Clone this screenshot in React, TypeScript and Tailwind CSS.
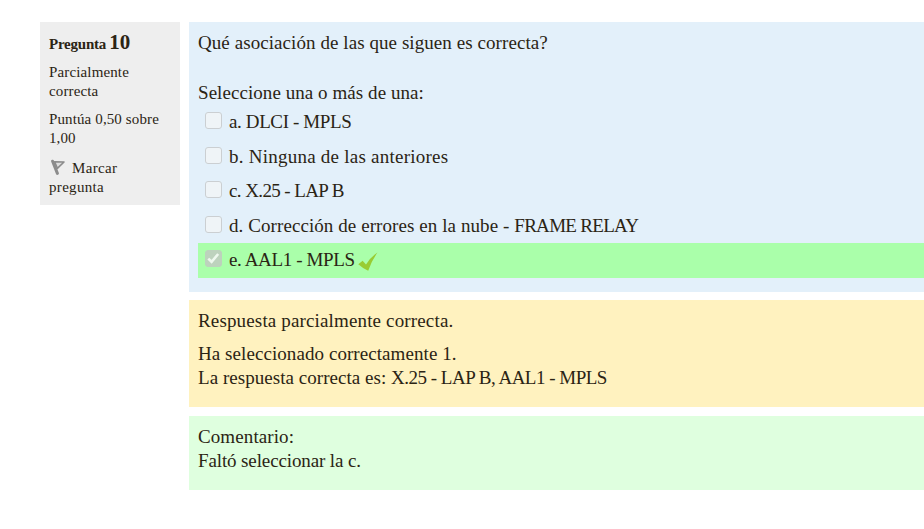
import React from "react";

type Option = { label: string; tracking: string; tail?: string; checked?: boolean };

const options: Option[] = [
  { label: "a. DLCI - MPLS", tracking: "tracking-[-0.38px]" },
  { label: "b. Ninguna de las anteriores", tracking: "tracking-[0.24px]" },
  { label: "c. X.25 - LAP B", tracking: "tracking-[-0.6px]" },
  { label: "d. Corrección de errores en la nube - ", tracking: "tracking-[0.08px]", tail: "FRAME RELAY" },
  { label: "e. AAL1 - MPLS", tracking: "tracking-[-0.38px]", checked: true },
];

function Checkbox({ checked }: { checked?: boolean }) {
  return (
    <svg className="mb-[3px] ml-[7px] mr-[7px] size-[17px] shrink-0" viewBox="0 0 17 17">
      <rect x="0.5" y="0.5" width="16" height="16" rx="2.5" fill={checked ? "#bdd2bd" : "#eff4f7"} stroke={checked ? "#bdd2bd" : "#cbcfd2"} />
      {checked && <path d="M3.3 8.6 6.6 11.8 13.2 4" fill="none" stroke="#eef8ee" strokeWidth="2.6" />}
    </svg>
  );
}

export default function App() {
  return (
    <div className="flex h-[529px] w-[924px] gap-[9px] overflow-hidden bg-white pl-10 pt-[22px] font-['Palatino_Linotype','Liberation_Serif',serif] text-[#2b2414]">
      <aside className="h-[183px] w-[140px] shrink-0 bg-[#eeeeee] pl-[9px] pt-[6px] text-[15px] leading-[19px]">
        <h3 className="flex h-7 items-baseline gap-[3px] whitespace-nowrap font-bold leading-7">
          <span className="text-[15px] tracking-[-0.22px]">Pregunta</span>
          <span className="text-[21px]">10</span>
        </h3>
        <p className="mt-[7px] tracking-[0.14px]">Parcialmente<br />correcta</p>
        <p className="mt-[9px] tracking-[0.12px]">Puntúa 0,50 sobre<br />1,00</p>
        <div className="mt-[11px] tracking-[0.32px]">
          <div className="flex items-center">
            <svg className="mb-[3px] ml-[2px] mr-[5px] size-4" viewBox="0 0 16 16">
              <path d="M3.6 2.8 13 3 6.4 9.4Z" fill="#dddddd" stroke="#8c8c8c" strokeWidth="1.6" strokeLinejoin="round" />
              <path d="M1.6 2.2 6.4 14.4" stroke="#8c8c8c" strokeWidth="3" strokeLinecap="round" />
            </svg>
            <span>Marcar</span>
          </div>
          pregunta
        </div>
      </aside>
      <main className="min-w-0 flex-1 text-[19px] leading-6">
        <section className="h-[270px] bg-[#e3f0fa] pl-[9px] pt-[9px]">
          <p className="tracking-[0.07px]">Qué asociación de las que siguen es correcta?</p>
          <p className="mt-[26px] tracking-[0.06px]">Seleccione una o más de una:</p>
          <div>
            {options.map((o) => (
              <div key={o.label} className={o.checked ? "flex h-[34.5px] items-center bg-[#aaffaa]" : "flex h-[34.5px] items-center"}>
                <Checkbox checked={o.checked} />
                <span className={o.tracking}>
                  {o.label}
                  {o.tail && <span className="tracking-[-0.7px]">{o.tail}</span>}
                </span>
                {o.checked && (
                  <svg className="ml-[3px] mt-[2px] h-[19px] w-[20px]" viewBox="0 0 20 19">
                    <path d="M0.3 12.2 4.6 8.8 8 12.6Q12.5 5 19.5 0.5 14 8 10.2 18.7Q5 16.5 0.3 12.2Z" fill="#99cc33" />
                  </svg>
                )}
              </div>
            ))}
          </div>
        </section>
        <section className="mt-2 h-[107px] bg-[#fff2bf] pl-[9px] pt-[9px]">
          <p className="tracking-[0.15px]">Respuesta parcialmente correcta.</p>
          <p className="mt-[9px] tracking-[0.07px]">Ha seleccionado correctamente 1.</p>
          <p className="tracking-[0.04px]">
            La respuesta correcta es: <span className="tracking-[-0.5px]">X.25 - LAP B, AAL1 - MPLS</span>
          </p>
        </section>
        <section className="mt-[9px] h-[74px] bg-[#dfffdf] pl-[9px] pt-[9px]">
          <p className="tracking-[0.1px]">Comentario:</p>
          <p className="tracking-[-0.12px]">Faltó seleccionar la c.</p>
        </section>
      </main>
    </div>
  );
}
